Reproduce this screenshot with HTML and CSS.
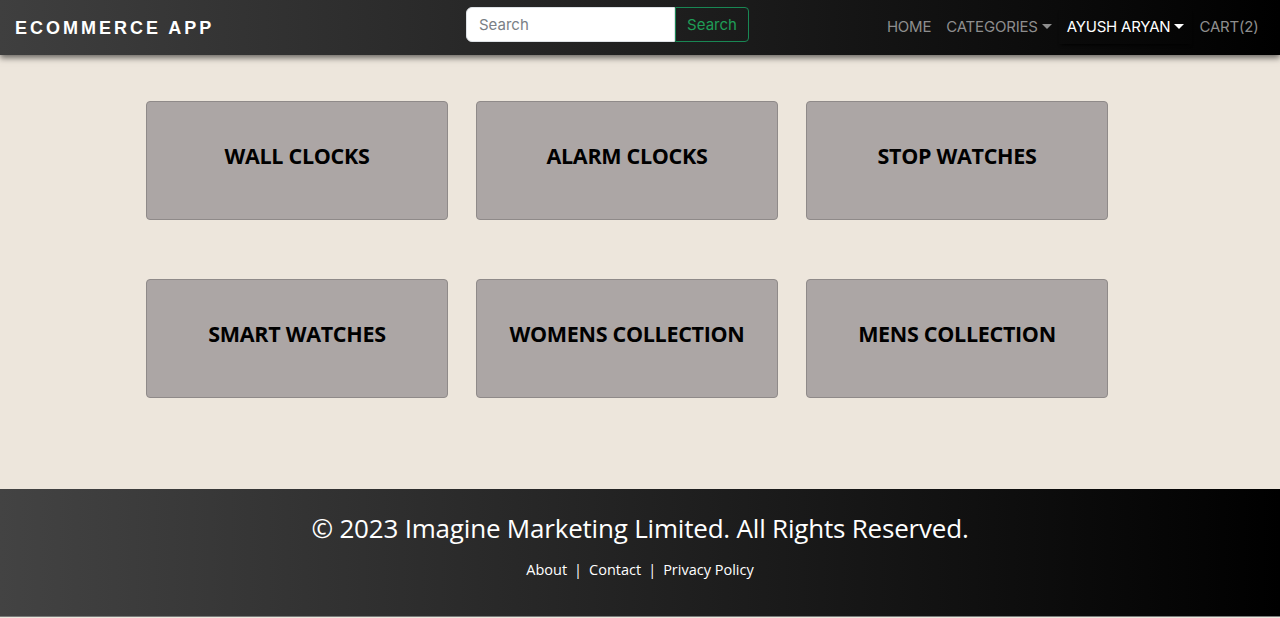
FILE: index.html
```html
<!DOCTYPE html>
<html lang="en">
<head>
<meta charset="utf-8">
<title>Ecommerce App</title>
<link rel="stylesheet" href="styles.css">
</head>
<body>
<header class="navbar">
  <a class="brand" href="#">ECOMMERCE APP</a>
  <form class="search">
    <input class="search-input" type="text" placeholder="Search">
    <button class="search-btn" type="button">Search</button>
  </form>
  <nav class="nav">
    <a class="nav-link" href="#">HOME</a>
    <a class="nav-link dropdown" href="#">CATEGORIES<span class="caret"></span></a>
    <a class="nav-link dropdown active" href="#">AYUSH ARYAN<span class="caret"></span></a>
    <a class="nav-link" href="#">CART(2)</a>
  </nav>
</header>
<main class="main">
  <div class="grid">
    <a class="card" href="#">WALL CLOCKS</a>
    <a class="card" href="#">ALARM CLOCKS</a>
    <a class="card" href="#">STOP WATCHES</a>
    <a class="card" href="#">SMART WATCHES</a>
    <a class="card" href="#">WOMENS COLLECTION</a>
    <a class="card" href="#">MENS COLLECTION</a>
  </div>
</main>
<footer class="footer">
  <h4 class="copy">© 2023 Imagine Marketing Limited. All Rights Reserved.</h4>
  <p class="links"><a href="#">About</a><span class="sep">|</span><a href="#">Contact</a><span class="sep">|</span><a href="#">Privacy Policy</a></p>
</footer>
</body>
</html>
```
FILE: styles.css
```css
* { box-sizing: border-box; }
html, body { margin: 0; padding: 0; }
body {
  background: #ede6dc;
  font-family: "Open Sans", "Noto Sans", sans-serif;
  height: 618px;
  overflow: hidden;
}
a { text-decoration: none; color: inherit; }

.navbar {
  position: relative;
  z-index: 2;
  height: 55px;
  display: flex;
  align-items: center;
  background: linear-gradient(to right, #3f3f3f 0%, #000 100%);
  box-shadow: 0 3px 6px rgba(0,0,0,0.55);
  padding: 0 14px 0 15px;
}
.brand {
  font-family: "Liberation Sans", Arial, sans-serif;
  font-weight: 700;
  font-size: 18px;
  letter-spacing: 3px;
  color: #fff;
  width: 451px;
  padding-top: 1px;
}
.search {
  display: flex;
  margin-top: -6px;
}
.search-input {
  width: 209px;
  height: 35px;
  border: 1px solid #dee2e6;
  border-radius: 6px 0 0 6px;
  padding: 0 12px;
  font-family: "Inter", sans-serif;
  font-size: 15px;
  color: #333;
  background: #fff;
  outline: none;
}
.search-input::placeholder { color: #7a7f86; }
.search-btn {
  height: 35px;
  width: 74px;
  border: 1px solid #198754;
  border-radius: 0 4px 4px 0;
  background: transparent;
  color: #1f9d57;
  font-family: "Inter", sans-serif;
  font-size: 15px;
  padding: 0;
}
.nav {
  margin-left: auto;
  display: flex;
  align-items: center;
  margin-top: -3px;
}
.nav-link {
  font-family: "Inter", sans-serif;
  font-size: 15px;
  color: #8e8e8e;
  padding: 8px 7.5px;
  display: flex;
  align-items: center;
  letter-spacing: -0.2px;
}
.nav-link.active {
  color: #fff;
  box-shadow: 0 3px 3px -2px rgba(0,0,0,0.9);
}
.caret {
  display: inline-block;
  margin-left: 4px;
  width: 0; height: 0;
  border-left: 5px solid transparent;
  border-right: 5px solid transparent;
  border-top: 5px solid currentColor;
}

.main {
  height: 434px;
  padding: 46px 0 0 146px;
}
.grid {
  display: grid;
  grid-template-columns: repeat(3, 302px);
  grid-auto-rows: 119px;
  column-gap: 28px;
  row-gap: 59px;
}
.card {
  background: #aca6a5;
  border: 1px solid #8f8a89;
  border-radius: 4px;
  display: flex;
  align-items: center;
  justify-content: center;
  font-family: "Open Sans", sans-serif;
  font-weight: 700;
  font-size: 21.5px;
  letter-spacing: -0.3px;
  color: #000;
  padding-bottom: 10px;
}

.footer {
  height: 128px;
  background: linear-gradient(to right, #434343 0%, #000 100%);
  border-bottom: 1px solid #7a7a7a;
  color: #fff;
  text-align: center;
  padding-top: 21px;
  font-family: "Open Sans", sans-serif;
}
.copy {
  margin: 0;
  font-weight: 500;
  font-size: 26px;
  line-height: 36px;
  letter-spacing: -0.2px;
}
.links {
  margin: 14px 0 0;
  font-size: 14.5px;
  line-height: 20px;
  color: #fff;
}
.sep { margin: 0 7px; color: #fff; }
```
